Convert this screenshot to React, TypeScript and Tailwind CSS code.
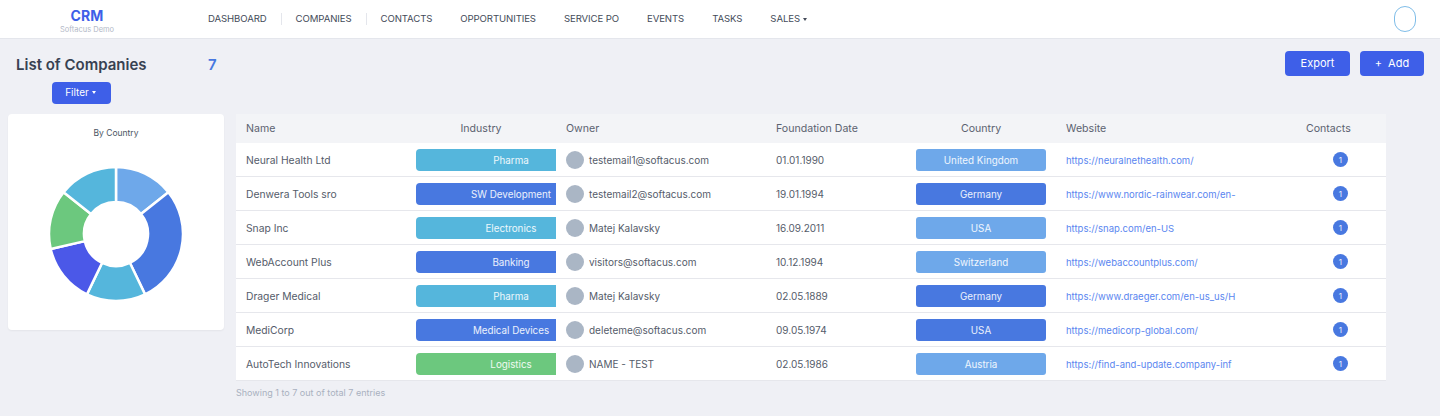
const navItems = ["DASHBOARD", "COMPANIES", "CONTACTS", "OPPORTUNITIES", "SERVICE PO", "EVENTS", "TASKS"];

const SKY = "bg-[#55b6dc]";
const BLUE = "bg-[#4878e0]";
const LIGHT = "bg-[#6ea8ea]";
const GREEN = "bg-[#6cc87e]";

const rows = [
  { name: "Neural Health Ltd", industry: "Pharma", industryColor: SKY, owner: "testemail1@softacus.com", date: "01.01.1990", country: "United Kingdom", countryColor: LIGHT, site: "https://neuralnethealth.com/" },
  { name: "Denwera Tools sro", industry: "SW Development", industryColor: BLUE, owner: "testemail2@softacus.com", date: "19.01.1994", country: "Germany", countryColor: BLUE, site: "https://www.nordic-rainwear.com/en-" },
  { name: "Snap Inc", industry: "Electronics", industryColor: SKY, owner: "Matej Kalavsky", date: "16.09.2011", country: "USA", countryColor: LIGHT, site: "https://snap.com/en-US" },
  { name: "WebAccount Plus", industry: "Banking", industryColor: BLUE, owner: "visitors@softacus.com", date: "10.12.1994", country: "Switzerland", countryColor: LIGHT, site: "https://webaccountplus.com/" },
  { name: "Drager Medical", industry: "Pharma", industryColor: SKY, owner: "Matej Kalavsky", date: "02.05.1889", country: "Germany", countryColor: BLUE, site: "https://www.draeger.com/en-us_us/H" },
  { name: "MediCorp", industry: "Medical Devices", industryColor: BLUE, owner: "deleteme@softacus.com", date: "09.05.1974", country: "USA", countryColor: BLUE, site: "https://medicorp-global.com/" },
  { name: "AutoTech Innovations", industry: "Logistics", industryColor: GREEN, owner: "NAME - TEST", date: "02.05.1986", country: "Austria", countryColor: LIGHT, site: "https://find-and-update.company-inf" },
];

const slices = [
  { from: 0, to: 1, color: "#6ea8ea" },
  { from: 1, to: 3, color: "#4878e0" },
  { from: 3, to: 4, color: "#55b6dc" },
  { from: 4, to: 5, color: "#4b58e8" },
  { from: 5, to: 6, color: "#6cc87e" },
  { from: 6, to: 7, color: "#55b6dc" },
];

// donut slice between two sevenths of the circle
const slicePath = (from: number, to: number) => {
  const R = 67;
  const r = 32;
  const c = 68;
  const pt = (rad: number, step: number) => {
    const a = (step / 7) * 2 * Math.PI;
    return `${(c + rad * Math.sin(a)).toFixed(2)} ${(c - rad * Math.cos(a)).toFixed(2)}`;
  };
  const large = to - from > 3.5 ? 1 : 0;
  return `M${pt(R, from)} A${R} ${R} 0 ${large} 1 ${pt(R, to)} L${pt(r, to)} A${r} ${r} 0 ${large} 0 ${pt(r, from)} Z`;
};

const gridCols = "grid grid-cols-[180px_150px_210px_140px_150px_206px_114px] items-center";

const Caret = () => (
  <span className="ml-[3px] inline-block h-0 w-0 border-x-2 border-t-[3px] border-x-transparent border-t-current align-middle" />
);

const App = () => {
  return (
    <div className="min-h-[416px] bg-[#eff0f5] font-['Inter',sans-serif] text-[#4b5563]">
      <header className="flex h-[39px] items-center border-b border-[#e4e6ec] bg-white">
        <div className="flex w-[208px] flex-col items-center pt-[4px] pr-[34px]">
          <span className="text-[14px] leading-[16px] font-bold tracking-[0.2px] text-[#3e5fe8]">CRM</span>
          <span className="mt-[1px] text-[7.5px] leading-[10px] text-[#b3b9c7]">Softacus Demo</span>
        </div>
        <nav className="flex items-center text-[9.6px] tracking-[-0.1px] text-[#444b59]">
          {navItems.map((item, i) => (
            <div key={item} className="flex items-center">
              <span className="whitespace-nowrap">{item}</span>
              {i < 2 ? (
                <span className="mx-[14px] h-3 w-px bg-[#e4e6ec]" />
              ) : (
                <span className="w-[28px]" />
              )}
            </div>
          ))}
          <span className="whitespace-nowrap">
            SALES
            <Caret />
          </span>
        </nav>
        <div className="mr-6 ml-auto h-[26px] w-[22px] rounded-[11px] border border-[#7fbde8]" />
      </header>

      <div className="flex items-start justify-between pt-3 pr-4 pl-4">
        <div className="flex h-[25px] items-center pt-[3px]">
          <h1 className="w-[192px] text-[15px] font-semibold text-[#374151]">List of Companies</h1>
          <span className="text-[15px] font-semibold text-[#4878e0]">7</span>
        </div>
        <div className="flex gap-[10px] text-[11px] text-white">
          <button className="h-[25px] w-[65px] rounded bg-[#3e5fe8]">Export</button>
          <button className="h-[25px] w-[64px] rounded bg-[#3e5fe8]">
            <span className="mr-[6px]">+</span>Add
          </button>
        </div>
      </div>

      <div className="mt-[6px] ml-[52px]">
        <button className="flex h-[22px] w-[59px] items-center justify-center rounded bg-[#3e5fe8] pr-[2px] pb-px text-[10px] text-white">
          Filter
          <Caret />
        </button>
      </div>

      <div className="mt-[10px] flex items-start gap-3 pl-2">
        <div className="flex h-[216px] w-[216px] flex-col items-center rounded bg-white pt-[14px] shadow-[0_1px_2px_rgba(0,0,0,0.05)]">
          <span className="text-[8.5px] leading-[10px] text-[#4b5563]">By Country</span>
          <svg width="136" height="136" viewBox="0 0 136 136" className="mt-[28px]">
            {slices.map((s) => (
              <path key={s.from} d={slicePath(s.from, s.to)} fill={s.color} stroke="#fff" strokeWidth="2.5" />
            ))}
          </svg>
        </div>

        <div className="w-[1150px]">
          <div className={`${gridCols} h-[29px] bg-[#f3f4f7] text-[10.6px] text-[#5b6270]`}>
            <span className="pl-[10px]">Name</span>
            <span className="w-[130px] text-center">Industry</span>
            <span>Owner</span>
            <span>Foundation Date</span>
            <span className="w-[130px] text-center">Country</span>
            <span>Website</span>
            <span className="pl-[34px]">Contacts</span>
          </div>
          {rows.map((row) => (
            <div key={row.name} className={`${gridCols} h-[34px] border-b border-[#e6e7ec] bg-white text-[#555c6a]`}>
              <span className="pt-[2px] pl-[10px] text-[10.3px]">{row.name}</span>
              <span className={`h-[22px] w-[140px] rounded-l pl-[50px] text-center text-[9.8px] leading-[23px] text-white/90 ${row.industryColor}`}>
                {row.industry}
              </span>
              <div className="flex items-center gap-[5px]">
                <span className="h-[18px] w-[18px] rounded-full bg-[#aab6c5]" />
                <span className="pt-px text-[10px]">{row.owner}</span>
              </div>
              <span className="pt-px text-[10px]">{row.date}</span>
              <span className={`h-[22px] w-[130px] rounded-[3px] text-center text-[9.8px] leading-[23px] text-white/90 ${row.countryColor}`}>
                {row.country}
              </span>
              <a className="pt-[3px] text-[9.5px] whitespace-nowrap text-[#5a86f0]">{row.site}</a>
              <span className="ml-[61px] flex h-[15px] w-[15px] items-center justify-center rounded-full bg-[#4878e0] text-[8px] text-white/90">
                1
              </span>
            </div>
          ))}
          <p className="mt-[5px] text-[9px] text-[#a9b0c0]">Showing 1 to 7 out of total 7 entries</p>
        </div>
      </div>
    </div>
  );
};

export default App;
